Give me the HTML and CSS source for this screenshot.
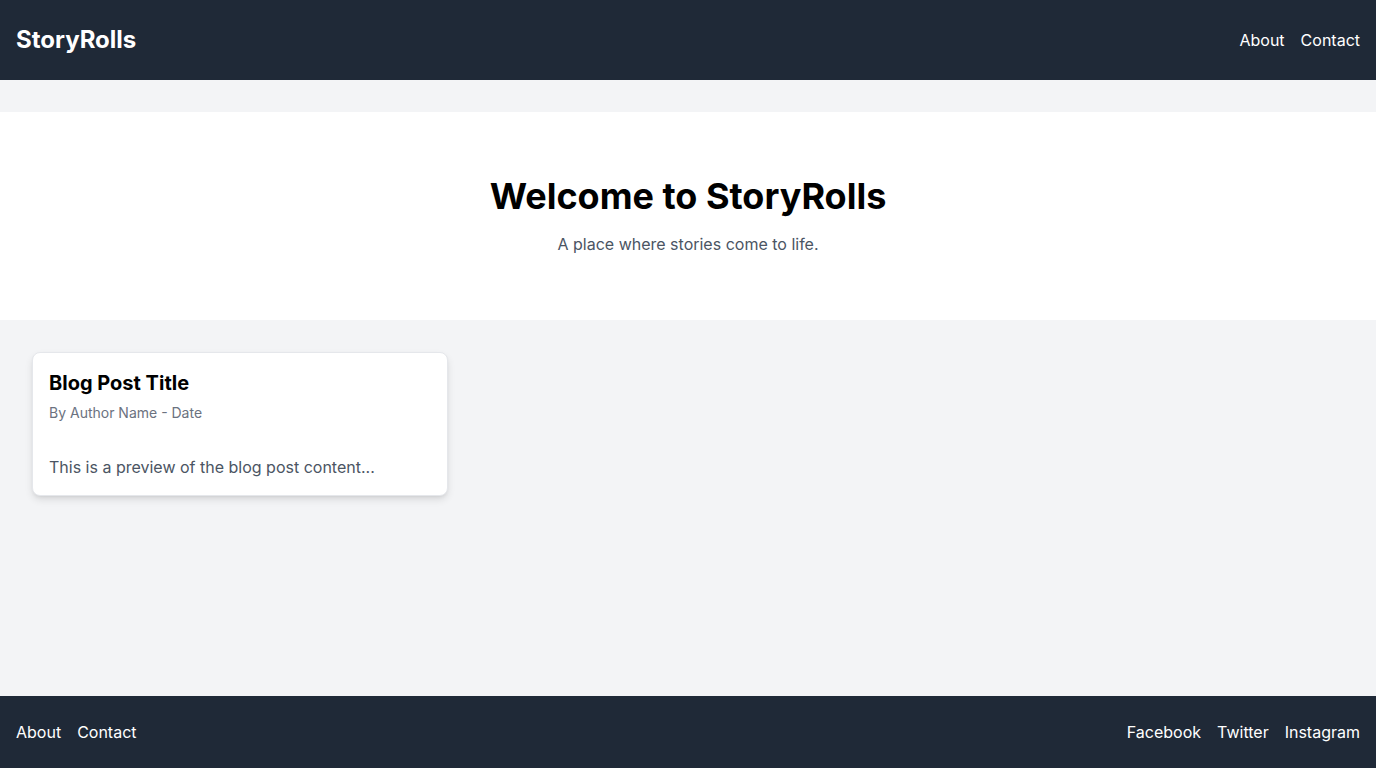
FILE: index.html
```html
<!DOCTYPE html>
<html lang="en">
<head>
<meta charset="utf-8">
<title>StoryRolls</title>
<link rel="stylesheet" href="styles.css">
</head>
<body>
<div class="page">
  <header class="site-header">
    <a class="logo" href="#">StoryRolls</a>
    <nav class="nav">
      <a href="#">About</a>
      <a href="#">Contact</a>
    </nav>
  </header>
  <main class="main">
    <section class="hero">
      <h1>Welcome to StoryRolls</h1>
      <p>A place where stories come to life.</p>
    </section>
    <section class="posts">
      <article class="card">
        <h2>Blog Post Title</h2>
        <p class="meta">By Author Name - Date</p>
        <p class="excerpt">This is a preview of the blog post content...</p>
      </article>
    </section>
  </main>
  <footer class="site-footer">
    <nav class="nav">
      <a href="#">About</a>
      <a href="#">Contact</a>
    </nav>
    <nav class="nav">
      <a href="#">Facebook</a>
      <a href="#">Twitter</a>
      <a href="#">Instagram</a>
    </nav>
  </footer>
</div>
</body>
</html>
```
FILE: styles.css
```css
* { box-sizing: border-box; }
html, body { margin: 0; padding: 0; }
body {
  font-family: Inter, "Noto Sans", sans-serif;
  background: #f3f4f6;
  color: #000;
}
a { text-decoration: none; color: inherit; }
.page {
  min-height: 100vh;
  display: flex;
  flex-direction: column;
}
.site-header, .site-footer {
  background: #1f2937;
  color: #fff;
  display: flex;
  justify-content: space-between;
  align-items: center;
  padding: 24px 16px;
}
.logo {
  font-size: 24px;
  line-height: 32px;
  font-weight: 700;
}
.nav {
  display: flex;
  gap: 16px;
  font-size: 16px;
  line-height: 24px;
}
.main {
  flex: 1;
  padding-top: 32px;
}
.hero {
  background: #fff;
  text-align: center;
  padding: 64px 16px;
}
.hero h1 {
  margin: 0;
  font-size: 36px;
  line-height: 40px;
  font-weight: 700;
}
.hero p {
  margin: 16px 0 0;
  font-size: 16px;
  line-height: 24px;
  color: #4b5563;
}
.posts {
  display: grid;
  grid-template-columns: repeat(3, 1fr);
  gap: 32px;
  padding: 32px;
}
.card {
  background: #fff;
  border-radius: 8px;
  padding: 16px;
  box-shadow: 0 4px 8px -1px rgba(0,0,0,0.12), 0 2px 4px -2px rgba(0,0,0,0.1);
  border: 1px solid #e5e7eb;
}
.card h2 {
  margin: 0;
  font-size: 20px;
  line-height: 28px;
  font-weight: 700;
}
.card .meta {
  margin: 6px 0 0;
  font-size: 14px;
  line-height: 20px;
  color: #6b7280;
}
.card .excerpt {
  margin: 32px 0 0;
  font-size: 16px;
  line-height: 24px;
  color: #4b5563;
}
```
